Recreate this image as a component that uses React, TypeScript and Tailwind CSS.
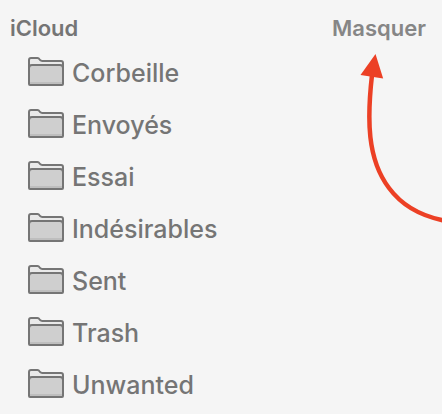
const folders = ['Corbeille', 'Envoyés', 'Essai', 'Indésirables', 'Sent', 'Trash', 'Unwanted'];

function FolderIcon() {
  return (
    <svg width="36" height="30" viewBox="0 0 36 30" fill="none" className="shrink-0" aria-hidden>
      <path
        d="M1 27V3Q1 1 3 1H9.5Q10.8 1 11.5 2.2L12.2 3.2Q12.9 4 14.2 4H33Q35 4 35 6V27Q35 28 34 28H2Q1 28 1 27Z"
        fill="#e9e9e9"
      />
      <path d="M1 11Q1 8 4 8H32Q35 8 35 11V27Q35 28 34 28H2Q1 28 1 27Z" fill="#cfcfcf" />
      <path d="M2 26H34" stroke="#bebebe" strokeWidth="2" />
      <path d="M1 11Q1 8 4 8H32Q35 8 35 11" stroke="#757575" strokeWidth="2" />
      <path
        d="M1 27V3Q1 1 3 1H9.5Q10.8 1 11.5 2.2L12.2 3.2Q12.9 4 14.2 4H33Q35 4 35 6V27Q35 28 34 28H2Q1 28 1 27Z"
        stroke="#757575"
        strokeWidth="2"
      />
    </svg>
  );
}

function PointerArrow() {
  return (
    <svg
      width="84"
      height="172"
      viewBox="0 0 84 172"
      fill="none"
      className="pointer-events-none absolute right-0 top-[52px]"
      aria-hidden
    >
      <path d="M14 23C9 67 9 107 31 136C45 155 63 164 86 168.5" stroke="#ec4025" strokeWidth="4.5" />
      <path d="M17.5 2L25.2 26.5L2.5 23Z" fill="#ec4025" />
    </svg>
  );
}

export default function App() {
  return (
    <div className="relative min-h-screen overflow-hidden bg-[#f5f5f5] font-['Inter',sans-serif] text-[#757575]">
      <header className="flex h-[46px] items-center justify-between pl-[10px] pr-4 pt-[10px] text-[22px] leading-7">
        <h2 className="font-semibold">iCloud</h2>
        <button type="button" className="font-semibold text-[#868686]">
          Masquer
        </button>
      </header>

      <ul className="pl-7">
        {folders.map((name) => (
          <li key={name}>
            <a href="#" className="flex h-[52px] items-center gap-2 text-[25px] font-medium leading-8">
              <FolderIcon />
              <span className="pt-0.5">{name}</span>
            </a>
          </li>
        ))}
      </ul>

      <PointerArrow />
    </div>
  );
}
